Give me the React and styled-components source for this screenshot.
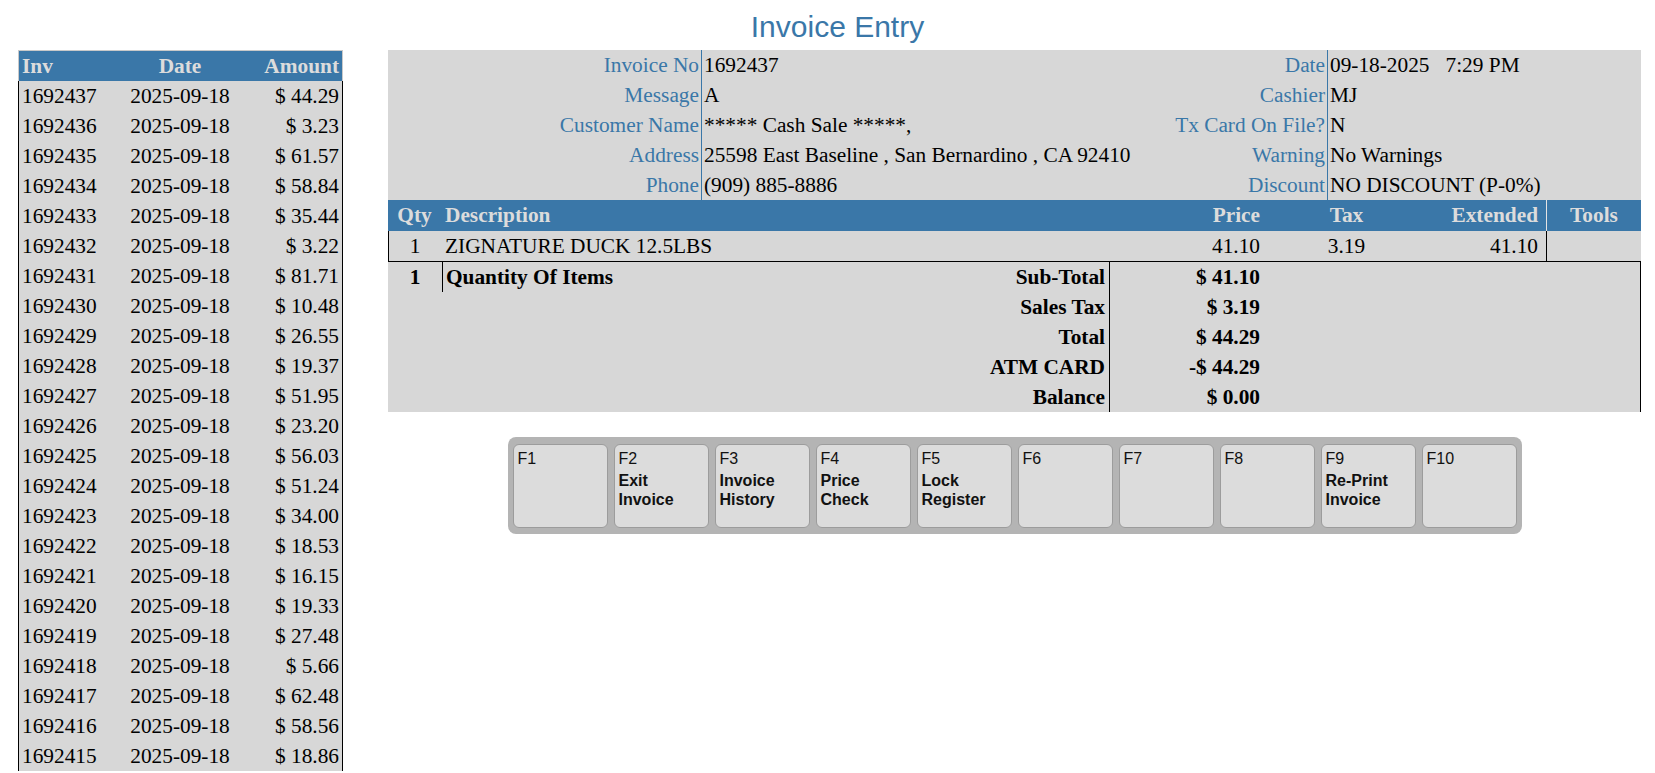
import React from 'react';
import styled, {createGlobalStyle} from 'styled-components';

const blue = '#3a77a8';
const panel = '#d7d7d7';
const headText = '#dcdcdc';

const GlobalStyle = createGlobalStyle`
  body {
    margin: 0;
    background: #fff;
    color: #000;
    font-family: "Liberation Serif", "Times New Roman", serif;
    font-size: 21.33px;
  }
`;

const Title = styled.h1`
  margin: 0;
  height: 50px;
  box-sizing: border-box;
  padding: 10px 0 0 20px;
  text-align: center;
  font: 400 30px/34px "Liberation Sans", Arial, sans-serif;
  color: ${blue};
`;

const Main = styled.div`
  display: flex;
  align-items: flex-start;
  gap: 45px;
  padding: 0 14px 0 18px;
`;

const InvoiceList = styled.div`
  width: 325px;
  flex: none;
`;

const ListHead = styled.div`
  display: grid;
  grid-template-columns: 100px 122px 101px;
  height: 31px;
  box-sizing: border-box;
  background: ${blue};
  border: 1px solid #c9c9c9;
  border-bottom: none;
  color: ${headText};
  font-weight: bold;
  line-height: 30px;
`;

const ListRow = styled.div`
  display: grid;
  grid-template-columns: 100px 122px 101px;
  height: 30px;
  line-height: 30px;
  background: ${panel};
  border-left: 1px solid #000;
  border-right: 1px solid #000;
`;

const Cell = styled.div`
  padding: 0 ${p => p.$pad ?? 3}px;
  text-align: ${p => p.$align || 'left'};
  white-space: pre;
  overflow: hidden;
`;

const Panel = styled.div`
  flex: 1;
  min-width: 0;
`;

const InfoGrid = styled.div`
  display: grid;
  grid-template-columns: 313px 449px 177px 314px;
  grid-auto-rows: 30px;
  line-height: 30px;
  background: ${panel};
`;

const InfoLabel = styled.div`
  text-align: right;
  padding-right: 2px;
  color: ${blue};
  white-space: nowrap;
`;

const InfoValue = styled.div`
  border-left: 1px solid ${blue};
  padding-left: 2px;
  white-space: pre;
  overflow: hidden;
`;

const itemCols = '53px 699px 123px 167px 116px 95px';

const ItemHead = styled.div`
  display: grid;
  grid-template-columns: ${itemCols};
  height: 31px;
  line-height: 31px;
  background: ${blue};
  color: ${headText};
  font-weight: bold;
`;

const ToolsHead = styled(Cell)`
  border-left: 1px solid #e4e4e4;
`;

const ItemRow = styled.div`
  display: grid;
  grid-template-columns: ${itemCols};
  height: 31px;
  box-sizing: border-box;
  line-height: 30px;
  background: ${panel};
  border-bottom: 1px solid #000;
`;

const EdgeCell = styled(Cell)`
  border-left: 1px solid #000;
`;

const Summary = styled.div`
  background: ${panel};
  border-right: 1px solid #000;
  font-weight: bold;
`;

const SumRow = styled.div`
  display: grid;
  grid-template-columns: 55px 457px 210px 153px 1fr;
  height: 30px;
  line-height: 30px;
`;

const SumCell = styled(Cell)`
  border-right: ${p => (p.$divider ? '1px solid #000' : 'none')};
`;

const FKeyBar = styled.div`
  display: flex;
  gap: 6px;
  width: fit-content;
  margin: 25px auto 0;
  padding: 7px 5px 6px;
  background: #b4b4b4;
  border-radius: 8px;
`;

const FKey = styled.div`
  width: 95px;
  height: 84px;
  box-sizing: border-box;
  padding: 5px 4px;
  background: #dcdcdc;
  border: 1px solid #9c9c9c;
  border-radius: 6px;
  font-family: "Liberation Sans", Arial, sans-serif;
  font-size: 16px;
  color: #111;
`;

const KeyName = styled.div`
  line-height: 18px;
`;

const KeyLabel = styled.div`
  margin-top: 3px;
  font-weight: bold;
  line-height: 19px;
`;

const invoices = [
  ['1692437', '44.29'], ['1692436', '3.23'], ['1692435', '61.57'], ['1692434', '58.84'],
  ['1692433', '35.44'], ['1692432', '3.22'], ['1692431', '81.71'], ['1692430', '10.48'],
  ['1692429', '26.55'], ['1692428', '19.37'], ['1692427', '51.95'], ['1692426', '23.20'],
  ['1692425', '56.03'], ['1692424', '51.24'], ['1692423', '34.00'], ['1692422', '18.53'],
  ['1692421', '16.15'], ['1692420', '19.33'], ['1692419', '27.48'], ['1692418', '5.66'],
  ['1692417', '62.48'], ['1692416', '58.56'], ['1692415', '18.86'],
];

const info = [
  ['Invoice No', '1692437', 'Date', '09-18-2025   7:29 PM'],
  ['Message', 'A', 'Cashier', 'MJ'],
  ['Customer Name', '***** Cash Sale *****,', 'Tx Card On File?', 'N'],
  ['Address', '25598 East Baseline , San Bernardino , CA 92410', 'Warning', 'No Warnings'],
  ['Phone', '(909) 885-8886', 'Discount', 'NO DISCOUNT (P-0%)'],
];

const totals = [
  ['Sub-Total', '$ 41.10'],
  ['Sales Tax', '$ 3.19'],
  ['Total', '$ 44.29'],
  ['ATM CARD', '-$ 44.29'],
  ['Balance', '$ 0.00'],
];

const fkeys = [
  ['F1'], ['F2', 'Exit', 'Invoice'], ['F3', 'Invoice', 'History'], ['F4', 'Price', 'Check'],
  ['F5', 'Lock', 'Register'], ['F6'], ['F7'], ['F8'], ['F9', 'Re-Print', 'Invoice'], ['F10'],
];

const App = () => {
  return (
    <>
      <GlobalStyle />
      <Title>Invoice Entry</Title>
      <Main>
        <InvoiceList>
          <ListHead>
            <Cell>Inv</Cell>
            <Cell $align="center">Date</Cell>
            <Cell $align="right">Amount</Cell>
          </ListHead>
          {invoices.map(([inv, amt]) => (
            <ListRow key={inv}>
              <Cell>{inv}</Cell>
              <Cell $align="center">2025-09-18</Cell>
              <Cell $align="right">$ {amt}</Cell>
            </ListRow>
          ))}
        </InvoiceList>

        <Panel>
          <InfoGrid>
            {info.map(([l1, v1, l2, v2]) => (
              <React.Fragment key={l1}>
                <InfoLabel>{l1}</InfoLabel>
                <InfoValue>{v1}</InfoValue>
                <InfoLabel>{l2}</InfoLabel>
                <InfoValue>{v2}</InfoValue>
              </React.Fragment>
            ))}
          </InfoGrid>

          <ItemHead>
            <Cell $align="center">Qty</Cell>
            <Cell $pad={4}>Description</Cell>
            <Cell $align="right">Price</Cell>
            <Cell $align="center">Tax</Cell>
            <Cell $align="right" $pad={8}>Extended</Cell>
            <ToolsHead $align="center">Tools</ToolsHead>
          </ItemHead>
          <ItemRow>
            <EdgeCell $align="center">1</EdgeCell>
            <Cell $pad={4}>ZIGNATURE DUCK 12.5LBS</Cell>
            <Cell $align="right">41.10</Cell>
            <Cell $align="center">3.19</Cell>
            <Cell $align="right" $pad={8}>41.10</Cell>
            <EdgeCell />
          </ItemRow>

          <Summary>
            {totals.map(([label, value], i) => (
              <SumRow key={label}>
                <SumCell $align="center" $divider={i === 0}>{i === 0 ? '1' : ''}</SumCell>
                <SumCell>{i === 0 ? 'Quantity Of Items' : ''}</SumCell>
                <SumCell $align="right" $pad={4} $divider>{label}</SumCell>
                <SumCell $align="right">{value}</SumCell>
                <SumCell />
              </SumRow>
            ))}
          </Summary>

          <FKeyBar>
            {fkeys.map(([name, ...label]) => (
              <FKey key={name}>
                <KeyName>{name}</KeyName>
                {label.length > 0 && (
                  <KeyLabel>
                    {label.map(line => <div key={line}>{line}</div>)}
                  </KeyLabel>
                )}
              </FKey>
            ))}
          </FKeyBar>
        </Panel>
      </Main>
    </>
  );
};

export default App;
